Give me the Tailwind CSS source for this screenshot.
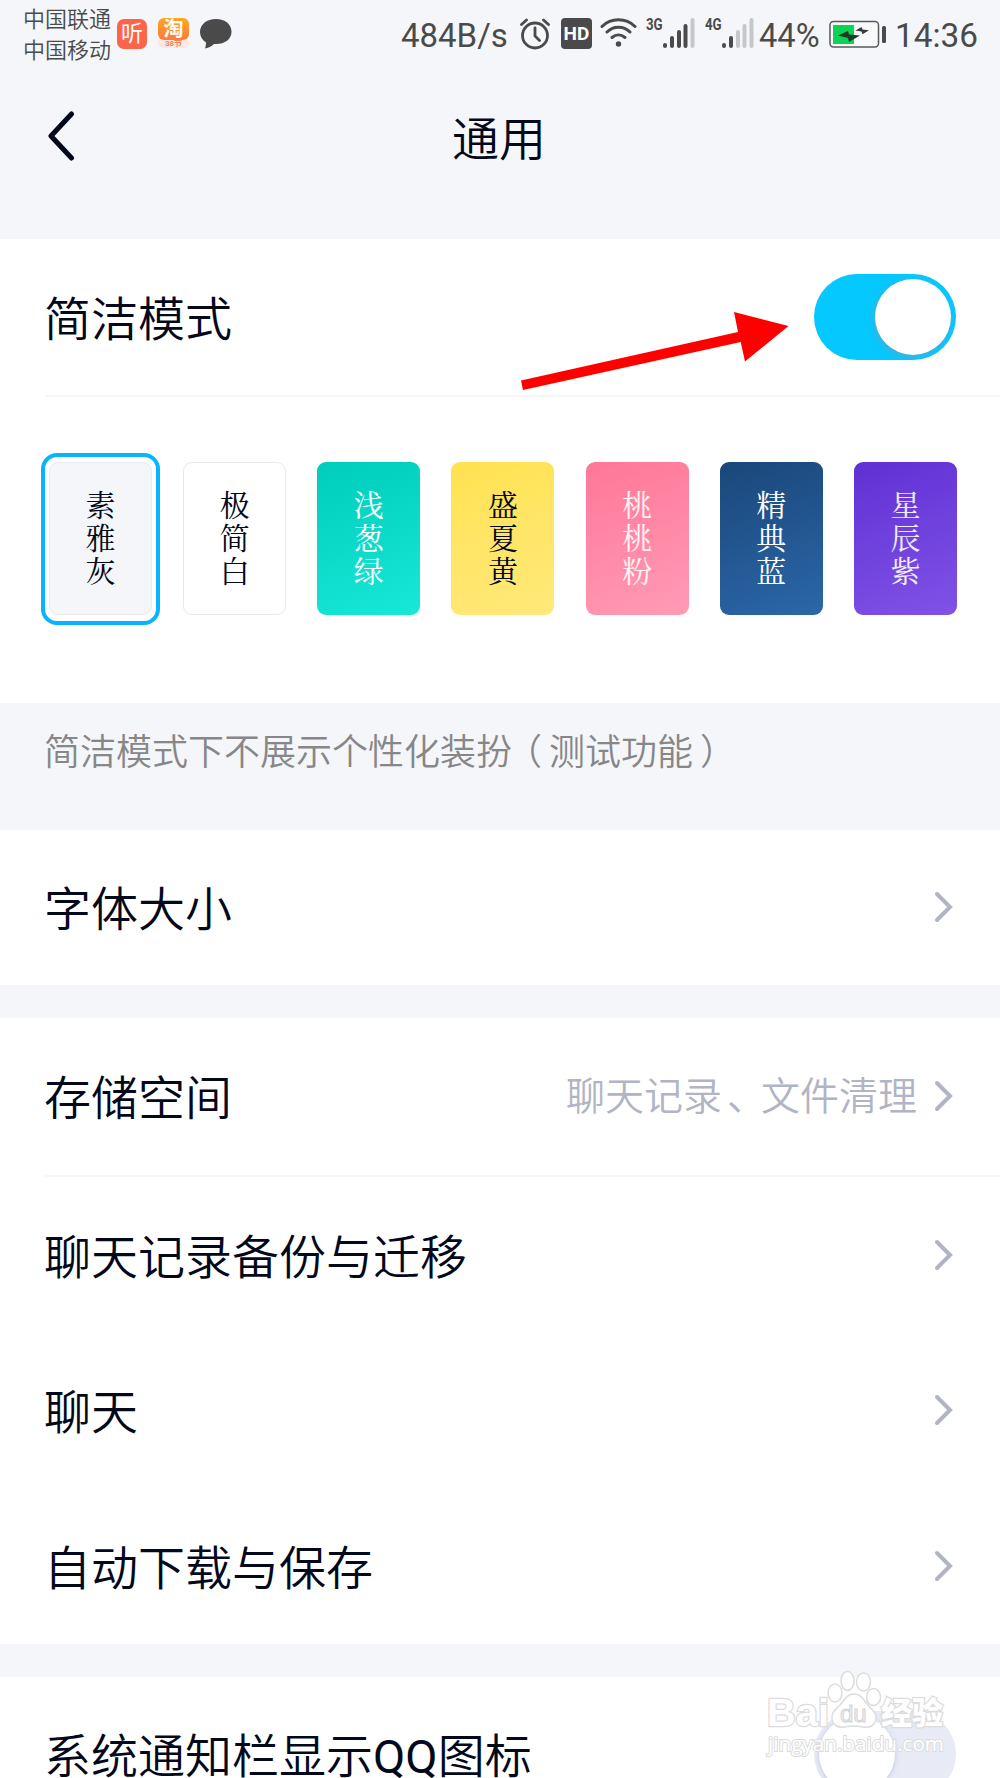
<!DOCTYPE html>
<html lang="zh-CN">
<head>
    <meta charset="UTF-8" />
    <meta name="viewport" content="width=device-width, initial-scale=1.0" />
    <title>通用</title>
    <script src="https://cdn.jsdelivr.net/npm/@tailwindcss/browser@4"></script>
</head>
<body class="relative w-[1000px] h-[1778px] overflow-hidden bg-[#f4f6fa] text-[#03081a] font-[Roboto,'Noto_Sans_CJK_SC',sans-serif] font-[350]">

<!-- Статус-бар -->
<div class="flex h-[70px] text-[#4a4a4a] font-normal">
    <div class="ml-[23px] mt-[4px] w-[94px] text-[22px] leading-[31px] whitespace-nowrap font-[350]">
        <div>中国联通</div>
        <div>中国移动</div>
    </div>
    <div class="mt-[19px] size-[30px] rounded-[7px] bg-[#fc6549] text-white text-[22px] leading-[29px] text-center">听</div>
    <div class="ml-[11px] mt-[18px] w-[31px] h-[31px]">
        <div class="h-[22px] rounded-[6px] bg-linear-to-b from-[#ffa51e] to-[#ff7a3c] text-white text-[20px] leading-[22px] font-bold text-center">淘</div>
        <div class="h-[8px] rounded-b-[5px] bg-[#fde9e1] text-[#f5835a] text-[8px] leading-[8px] font-bold text-center">38节</div>
    </div>
    <svg class="ml-[11px] mt-[18px]" width="32" height="32" viewBox="0 0 32 32" fill="#4a4a4a">
        <path d="M16 1C7 1 0 6.300 0 14c0 4.500 2.300 8 6 10.500 0 2-.5 4.500-1 6 4-.7 7-2.500 9-4.500 10 .8 17.500-4.500 17.500-12C31.500 6.300 25 1 16 1z" />
    </svg>

    <div class="ml-[169px] mt-[13px] w-[119px] text-[34px] leading-[44px] whitespace-nowrap"><span class="inline-block origin-left scale-x-97">484B/s</span></div>
    <svg class="mt-[18px]" width="31" height="32" viewBox="0 0 31 32" fill="none" stroke="#4a4a4a" stroke-width="2.800" stroke-linecap="round">
        <circle cx="15" cy="17.500" r="12.500" />
        <path d="M15 10v8l4.500 4.500M1.500 6.500l5-4.500M28.500 6.500l-5-4.500" />
    </svg>
    <div class="ml-[10px] mt-[18px] w-[31px] h-[31px] rounded-[4px] bg-[#4a4a4a] text-white text-[19px] leading-[32px] font-bold text-center">HD</div>
    <svg class="ml-[8px] mt-[17px]" width="37" height="32" viewBox="0 0 37 32" fill="none" stroke="#4a4a4a" stroke-width="3" stroke-linecap="round">
        <path d="M2 9.500C11 .5 26 .5 35 9.500M7 15c6.500-6.500 16.500-6.500 23 0M12 20.500c4-3.500 9-3.500 13 0" />
        <circle cx="18.500" cy="27" r="2.700" fill="#4a4a4a" stroke="none" />
    </svg>
    <div class="ml-[9px] mt-[15px] w-[17px] text-[17px] leading-[19px] font-bold whitespace-nowrap"><span class="inline-block origin-left scale-x-78">3G</span></div>
    <svg class="mt-[17px]" width="32" height="32" viewBox="0 0 32 32" stroke="#4a4a4a" stroke-width="4" stroke-linecap="round">
        <path d="M2 28v1M9 21v8M16 15v14M22.500 9v20" />
        <path d="M29.500 3v26" stroke="#c6c7ca" />
    </svg>
    <div class="ml-[10px] mt-[15px] w-[17px] text-[17px] leading-[19px] font-bold whitespace-nowrap"><span class="inline-block origin-left scale-x-78">4G</span></div>
    <svg class="mt-[17px]" width="32" height="32" viewBox="0 0 32 32" stroke="#4a4a4a" stroke-width="4" stroke-linecap="round">
        <path d="M2 28v1M9 21v8" />
        <path d="M16 15v14M22.500 9v20M29.500 3v26" stroke="#c6c7ca" />
    </svg>
    <div class="ml-[5px] mt-[13px] w-[70px] text-[34px] leading-[44px] whitespace-nowrap"><span class="inline-block origin-left scale-x-96">44%</span></div>
    <svg class="mt-[20px]" width="58" height="29" viewBox="0 0 58 29">
        <rect x="1" y="1.500" width="48.500" height="25.500" rx="3.500" fill="#f8f9fb" stroke="#5a5a5a" stroke-width="1.500" />
        <rect x="4" y="5" width="21" height="19" fill="#0bd354" />
        <path d="M9 15.500l10-4.500 1 3.500 11 1-11 6.500-1-4z" fill="#1d3c28" />
        <path d="M26.500 10.500l6-3.500 1 2.500 6.500.8-6.500 4-1-2.800z" fill="#3a3a3a" />
        <rect x="53" y="6" width="4" height="17" rx="1.500" fill="#4a4a4a" />
    </svg>
    <div class="ml-[8px] mt-[13px] text-[34px] leading-[44px] whitespace-nowrap"><span class="inline-block origin-left scale-x-98">14:36</span></div>
</div>

<!-- Заголовок -->
<header class="flex h-[169px] pl-[47px]">
    <svg class="mt-[41px]" width="28" height="50" viewBox="0 0 28 50" fill="none" stroke="#03081a" stroke-width="5" stroke-linecap="round" stroke-linejoin="round">
        <path d="M24.500 3L4 25l20.500 22" />
    </svg>
    <h1 class="ml-[377px] mt-[36px] text-[47px] leading-[68px]">通用</h1>
</header>

<!-- Простой режим и темы -->
<section class="h-[464px] bg-white">
    <div class="ml-[45px] h-[158px] pr-[44px] flex items-center justify-between border-b-2 border-[#f5f6fa]">
        <span class="-ml-px mt-[6px] text-[47px]">简洁模式</span>
        <div class="-mt-px w-[142px] h-[86px] rounded-full bg-[#05c8ff] flex items-center justify-end pr-[5px]">
            <div class="size-[76px] rounded-full bg-white shadow-[-1px_2px_6px_rgba(130,150,180,0.6)]"></div>
        </div>
    </div>
    <div class="flex justify-between pt-[65px] pl-[49px] pr-[43px] text-[30px] leading-[33px] text-center font-normal font-['Noto_Serif_CJK_SC','Noto_Sans_CJK_SC',serif]">
        <div class="relative w-[103px] h-[153px] pt-[24px] px-[35px] rounded-[9px] border border-[#e9ebf0] bg-[#f4f6fa]">
            <div class="absolute -top-[10px] -left-[9px] w-[119px] h-[172px] rounded-[16px] border-4 border-[#06b4ff]"></div>
            素雅灰
        </div>
        <div class="w-[103px] h-[153px] pt-[24px] px-[35px] rounded-[9px] border border-[#e9e9eb] bg-white">极简白</div>
        <div class="w-[103px] h-[153px] pt-[25px] px-[36px] rounded-[9px] bg-linear-160 from-[#00cdbb] to-[#16e8d8] text-white">浅葱绿</div>
        <div class="w-[103px] h-[153px] pt-[25px] px-[36px] rounded-[9px] bg-linear-160 from-[#ffe250] to-[#ffe97a]">盛夏黄</div>
        <div class="w-[103px] h-[153px] pt-[25px] px-[36px] rounded-[9px] bg-linear-160 from-[#ff7698] to-[#ff9bb6] text-white/90">桃桃粉</div>
        <div class="w-[103px] h-[153px] pt-[25px] px-[36px] rounded-[9px] bg-linear-160 from-[#1a477a] to-[#2b67a9] text-white">精典蓝</div>
        <div class="w-[103px] h-[153px] pt-[25px] px-[36px] rounded-[9px] bg-linear-160 from-[#612fd4] to-[#8052e6] text-white/90">星辰紫</div>
    </div>
</section>

<p class="h-[127px] pl-[44px] pt-[24px] text-[36px] leading-[53px] text-[#878787] whitespace-nowrap">简洁模式下不展示个性化装扮<span class="-ml-[6px] mr-[7px]">（</span>测试功能<span class="ml-[7px]">）</span></p>

<!-- Размер шрифта -->
<section class="h-[155px] bg-white pl-[44px] pr-[46px] flex items-center justify-between">
    <span class="mt-[6px] text-[47px]">字体大小</span>
    <svg class="-mt-px" width="20" height="32" viewBox="0 0 20 32" fill="none" stroke="#b1b4c4" stroke-width="4" stroke-linecap="round"><path d="M3 3l13 13L3 29" /></svg>
</section>

<!-- Хранилище и чаты -->
<section class="mt-[33px] h-[626px] bg-white pl-[45px]">
    <div class="h-[159px] pr-[46px] flex items-center border-b-2 border-[#f4f6fa]">
        <span class="-ml-px mt-[6px] text-[47px]">存储空间</span>
        <span class="mt-[2px] ml-auto mr-[17px] text-[39px] text-[#b1b4c4]">聊天记录<span class="ml-[5px] -mr-[5px]">、</span>文件清理</span>
        <svg class="-mt-px" width="20" height="32" viewBox="0 0 20 32" fill="none" stroke="#b1b4c4" stroke-width="4" stroke-linecap="round"><path d="M3 3l13 13L3 29" /></svg>
    </div>
    <div class="h-[156px] pr-[46px] flex items-center justify-between">
        <span class="-ml-px mt-[6px] text-[47px]">聊天记录备份与迁移</span>
        <svg class="-mt-px" width="20" height="32" viewBox="0 0 20 32" fill="none" stroke="#b1b4c4" stroke-width="4" stroke-linecap="round"><path d="M3 3l13 13L3 29" /></svg>
    </div>
    <div class="h-[155px] pr-[46px] flex items-center justify-between">
        <span class="-ml-px mt-[6px] text-[47px]">聊天</span>
        <svg class="-mt-px" width="20" height="32" viewBox="0 0 20 32" fill="none" stroke="#b1b4c4" stroke-width="4" stroke-linecap="round"><path d="M3 3l13 13L3 29" /></svg>
    </div>
    <div class="h-[156px] pr-[46px] flex items-center justify-between">
        <span class="-ml-px mt-[6px] text-[47px]">自动下载与保存</span>
        <svg class="-mt-px" width="20" height="32" viewBox="0 0 20 32" fill="none" stroke="#b1b4c4" stroke-width="4" stroke-linecap="round"><path d="M3 3l13 13L3 29" /></svg>
    </div>
</section>

<!-- Уведомления -->
<section class="mt-[33px] h-[155px] bg-white pl-[44px] pr-[44px] flex items-center justify-between">
    <span class="mt-[6px] text-[47px]">系统通知栏显示<span class="font-normal">QQ</span>图标</span>
    <div class="-mt-px w-[142px] h-[86px] rounded-full bg-[#e8ebf6] flex items-center pl-[5px]">
        <div class="size-[76px] rounded-full bg-white shadow-[0_1px_5px_rgba(150,160,200,0.5)]"></div>
    </div>
</section>

<!-- Стрелка -->
<svg class="absolute left-[515px] top-[305px]" width="280" height="92" viewBox="515 305 280 92" fill="#ff0000">
    <path d="M521 380.500L738 332L734 312L788.500 326L745 361.500L740.700 342L523 390z" />
</svg>

<!-- Водяной знак -->
<svg class="absolute left-[760px] top-[1665px]" width="195" height="95" viewBox="760 1665 195 95" fill="#ffffff" stroke="#dcdcdc" stroke-width="1.500">
    <text x="767" y="1726" font-family="Liberation Sans" font-weight="bold" font-size="39" textLength="62" lengthAdjust="spacingAndGlyphs" stroke-width="2.500" paint-order="stroke">Bai</text>
    <ellipse cx="835" cy="1693" rx="7" ry="9" />
    <ellipse cx="847.500" cy="1681" rx="6.500" ry="9.500" />
    <ellipse cx="863.500" cy="1682" rx="7" ry="9" />
    <ellipse cx="873.500" cy="1697" rx="7" ry="8.500" />
    <path d="M854 1694c-8 0-10 7-14 11-5 5-9 8-8 14 1 7 7 9 12 8 7-1.500 12-1.500 19 0 6 1 12-1 13-8 1-6-4-9-8-14-4-4-6-11-14-11z" />
    <text x="840" y="1722" font-family="Liberation Sans" font-weight="normal" font-size="24" fill="#eef0f6" stroke="#d4d4d8" stroke-width="1">du</text>
    <text x="881" y="1724" font-family="Noto Sans CJK SC" font-weight="900" font-size="31" stroke-width="2.500" paint-order="stroke">经验</text>
    <text x="768" y="1751" font-family="Open Sans" font-weight="400" font-size="20" textLength="176" lengthAdjust="spacingAndGlyphs" stroke-width="2" paint-order="stroke">jingyan.baidu.com</text>
</svg>
</body>
</html>
